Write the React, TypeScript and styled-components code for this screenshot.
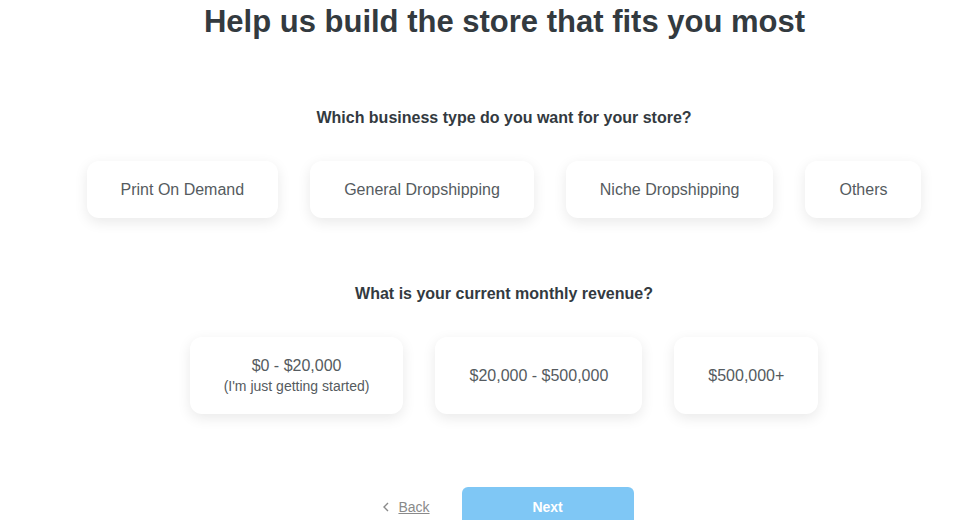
import React, { useState } from "react";
import styled, { createGlobalStyle } from "styled-components";

const Global = createGlobalStyle`
  html, body { margin: 0; padding: 0; background: #ffffff; }
  body { font-family: "Liberation Sans", Arial, sans-serif; overflow: hidden; }
`;

const Page = styled.div`
  width: 978px;
  height: 520px;
  box-sizing: border-box;
  padding-left: 30px;
  display: flex;
  flex-direction: column;
  align-items: center;
  overflow: hidden;
`;

const Title = styled.h1`
  margin: 4px 0 0 1px;
  font-size: 31px;
  line-height: 36px;
  font-weight: 700;
  color: #333a3f;
  text-align: center;
  white-space: nowrap;
`;

const Section = styled.section<{ $top: number }>`
  margin-top: ${(p) => p.$top}px;
  display: flex;
  flex-direction: column;
  align-items: center;
`;

const Question = styled.h2`
  margin: 0;
  font-size: 16px;
  line-height: 20px;
  font-weight: 700;
  color: #333a3f;
`;

const Options = styled.div<{ $gap: number }>`
  margin-top: ${(p) => p.$gap}px;
  display: flex;
  gap: 32px;
`;

const Option = styled.button<{ $h: number; $active?: boolean }>`
  height: ${(p) => p.$h}px;
  padding: 0 34px;
  border: none;
  border-radius: 12px;
  background: #ffffff;
  box-shadow: 0 4px 14px rgba(0, 0, 0, 0.09);
  font-family: "Liberation Sans", Arial, sans-serif;
  font-size: 16px;
  color: #555b60;
  display: flex;
  flex-direction: column;
  align-items: center;
  justify-content: center;
  cursor: pointer;
  outline: ${(p) => (p.$active ? "1px solid #7fc7f5" : "none")};
`;

const Main = styled.span`
  font-size: 16px;
  line-height: 21px;
`;

const Sub = styled.span`
  font-size: 14px;
  line-height: 21px;
`;

const Footer = styled.div`
  margin-top: 73px;
  display: flex;
  align-items: center;
  gap: 32px;
  padding-left: 8px;
`;

const Back = styled.a`
  display: flex;
  align-items: center;
  gap: 8px;
  font-size: 14px;
  color: #8a8a8a;
  cursor: pointer;
  span { text-decoration: underline; }
`;

const Next = styled.button`
  width: 172px;
  height: 40px;
  border: none;
  border-radius: 6px 6px 0 0;
  background: #7fc7f5;
  color: #ffffff;
  font-family: "Liberation Sans", Arial, sans-serif;
  font-weight: 700;
  font-size: 14px;
  display: flex;
  align-items: flex-start;
  justify-content: center;
  padding: 12px 0 0;
  box-sizing: border-box;
`;

const types = ["Print On Demand", "General Dropshipping", "Niche Dropshipping", "Others"];
const revenues = [
  { main: "$0 - $20,000", sub: "(I'm just getting started)" },
  { main: "$20,000 - $500,000" },
  { main: "$500,000+" },
];

export default function App() {
  const [type, setType] = useState<number | null>(null);
  const [rev, setRev] = useState<number | null>(null);
  return (
    <Page>
      <Global />
      <Title>Help us build the store that fits you most</Title>
      <Section $top={68}>
        <Question>Which business type do you want for your store?</Question>
        <Options $gap={33}>
          {types.map((t, i) => (
            <Option key={t} $h={57} $active={type === i} onClick={() => setType(i)}>
              <Main>{t}</Main>
            </Option>
          ))}
        </Options>
      </Section>
      <Section $top={66}>
        <Question>What is your current monthly revenue?</Question>
        <Options $gap={33}>
          {revenues.map((r, i) => (
            <Option key={r.main} $h={77} $active={rev === i} onClick={() => setRev(i)}>
              <Main>{r.main}</Main>
              {r.sub && <Sub>{r.sub}</Sub>}
            </Option>
          ))}
        </Options>
      </Section>
      <Footer>
        <Back>
          <svg width="8" height="10" viewBox="0 0 8 10">
            <path d="M6 1 L2 5 L6 9" fill="none" stroke="#8a8a8a" strokeWidth="1.4" />
          </svg>
          <span>Back</span>
        </Back>
        <Next>Next</Next>
      </Footer>
    </Page>
  );
}
